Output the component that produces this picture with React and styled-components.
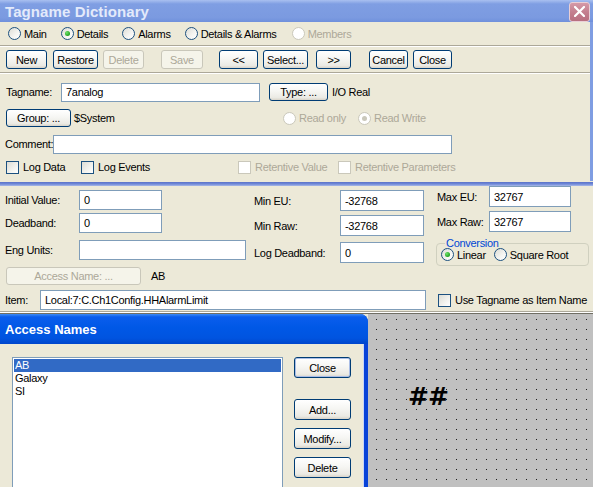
import React from "react";
import styled, { createGlobalStyle } from "styled-components";

const Global = createGlobalStyle`
  html, body { margin: 0; padding: 0; }
  body {
    font-family: "Liberation Sans", Arial, sans-serif;
    font-size: 11px;
    letter-spacing: -0.3px;
    color: #000;
    overflow: hidden;
    background: #ece9d8;
  }
  * { box-sizing: border-box; }
`;

const Screen = styled.div`
  width: 593px;
  height: 487px;
  overflow: hidden;
  display: flex;
  flex-direction: column;
  background: #ece9d8;
`;

const TitleBar = styled.div`
  height: 22px;
  flex: none;
  display: flex;
  align-items: center;
  justify-content: space-between;
  padding: 0 3px 0 5px;
  background: linear-gradient(180deg, #a9c0f0 0%, #7f9ee3 18%, #7b9ae0 80%, #7090dc 100%);
`;

const TitleText = styled.span`
  font-weight: bold;
  font-size: 15px;
  letter-spacing: 0.1px;
  color: #e3eafb;
`;

const CloseX = styled.div`
  width: 21px;
  height: 20px;
  margin-top: 1px;
  border-radius: 3px;
  border: 1px solid #e9cfd6;
  background: linear-gradient(180deg, #d59aa8 0%, #c47f8f 50%, #b86f80 100%);
  display: flex;
  align-items: center;
  justify-content: center;
`;

const TopPanel = styled.div`
  flex: none;
  display: flex;
  flex-direction: column;
  border-right: 3px solid #7f9de2;
  height: 159px;
`;

const RadioRow = styled.div`
  height: 23px;
  display: flex;
  align-items: center;
  padding-left: 8px;
  gap: 14px;
`;

const Sep = styled.div`
  height: 2px;
  flex: none;
  border-top: 1px solid #aca899;
  border-bottom: 1px solid #fff;
`;

const ButtonRow = styled.div`
  height: 25px;
  display: flex;
  align-items: flex-start;
  padding: 3px 0 0 6px;
`;

const Btn = styled.button`
  height: ${(p) => p.$h || 19}px;
  width: ${(p) => p.$w}px;
  margin-left: ${(p) => p.$ml || 0}px;
  margin-top: ${(p) => p.$mt || 0}px;
  padding: 0;
  font-family: inherit;
  font-size: 11px;
  letter-spacing: -0.3px;
  border: 1px solid ${(p) => (p.disabled ? "#c9c7ba" : "#003c74")};
  border-radius: 3px;
  color: ${(p) => (p.disabled ? "#aca899" : "#000")};
  background: ${(p) =>
    p.disabled
      ? "#f5f4ea"
      : "linear-gradient(180deg, #ffffff 0%, #f6f6f3 45%, #ebeae4 85%, #d8d3c8 100%)"};
  box-shadow: ${(p) => (p.$default ? "inset 0 0 0 1px #a9bde6" : "none")};
  flex: none;
`;

const FormBody = styled.div`
  display: flex;
  flex-direction: column;
  padding: 8px 0 0 0;
`;

const Row = styled.div`
  display: flex;
  align-items: center;
  height: ${(p) => p.$h || 20}px;
  margin-top: ${(p) => p.$mt || 0}px;
  padding-left: ${(p) => p.$pl ?? 5}px;
`;

const Label = styled.span`
  width: ${(p) => (p.$w ? `${p.$w}px` : "auto")};
  flex: none;
  margin-left: ${(p) => p.$ml || 0}px;
  color: ${(p) => (p.$disabled ? "#aca899" : "#000")};
  white-space: nowrap;
`;

const Input = styled.div`
  width: ${(p) => p.$w}px;
  height: ${(p) => p.$h || 20}px;
  flex: none;
  border: 1px solid #7f9db9;
  background: #fff;
  padding: 0 4px;
  display: flex;
  align-items: center;
  white-space: nowrap;
  overflow: hidden;
`;

const RadioItem = styled.label`
  display: flex;
  align-items: center;
  gap: 3px;
  flex: none;
  width: ${(p) => (p.$w ? `${p.$w}px` : "auto")};
  color: ${(p) => (p.$disabled ? "#aca899" : "#000")};
`;

const RadioCircle = styled.span`
  width: 13px;
  height: 13px;
  border-radius: 50%;
  border: 1px solid ${(p) => (p.$disabled ? "#cac8bb" : "#1c5180")};
  background: ${(p) =>
    p.$disabled ? "#fff" : "linear-gradient(135deg, #dcdcd5 0%, #f5f5f2 60%, #ffffff 100%)"};
  display: flex;
  align-items: center;
  justify-content: center;
  flex: none;
  &::after {
    content: "";
    display: ${(p) => (p.$on ? "block" : "none")};
    width: 5px;
    height: 5px;
    border-radius: 50%;
    background: ${(p) =>
      p.$disabled ? "#cac8bb" : "radial-gradient(circle at 35% 35%, #6fe36b 0%, #21a121 70%)"};
  }
`;

const CheckItem = styled.label`
  display: flex;
  align-items: center;
  gap: 4px;
  flex: none;
  width: ${(p) => (p.$w ? `${p.$w}px` : "auto")};
  margin-left: ${(p) => p.$ml || 0}px;
  color: ${(p) => (p.$disabled ? "#aca899" : "#000")};
`;

const CheckBox = styled.span`
  width: 13px;
  height: 13px;
  flex: none;
  border: 1px solid ${(p) => (p.$disabled ? "#cac8bb" : "#1c5180")};
  background: ${(p) =>
    p.$disabled ? "#fff" : "linear-gradient(135deg, #dcdcd5 0%, #f3f3ef 60%, #ffffff 100%)"};
`;

const BlueDivider = styled.div`
  height: 5px;
  flex: none;
  background: linear-gradient(180deg, #ece9d8 0%, #ece9d8 20%, #5a72c8 20%, #6f89d8 60%, #a9b9e8 100%);
`;

const Details = styled.div`
  flex: none;
  height: 126px;
  display: flex;
  flex-direction: column;
  border-bottom: 1px solid #aca899;
`;

const DetailCols = styled.div`
  display: flex;
  height: 99px;
`;

const Col = styled.div`
  display: flex;
  flex-direction: column;
  width: ${(p) => p.$w}px;
  padding-top: ${(p) => p.$pt || 0}px;
  flex: none;
`;

const Conversion = styled.fieldset`
  margin: 6px 0 0 -1px;
  padding: 0 0 3px 4px;
  width: 153px;
  height: 28px;
  border: 1px solid #d0d0bf;
  border-radius: 4px;
  display: flex;
  align-items: center;
  gap: 8px;
`;

const Legend = styled.legend`
  color: #0046d5;
  padding: 0 1px;
  margin-left: 4px;
  line-height: 10px;
`;

const BottomEdge = styled.div`
  height: 2px;
  flex: none;
  border-top: 1px solid #fff;
  border-bottom: 1px solid #716f64;
`;

const Bottom = styled.div`
  flex: 1;
  display: flex;
  min-height: 0;
`;

const Dialog = styled.div`
  width: 368px;
  flex: none;
  display: flex;
  flex-direction: column;
  background: #0843d8;
  border-top-right-radius: 8px;
`;

const DlgTitle = styled.div`
  height: 30px;
  flex: none;
  display: flex;
  align-items: center;
  padding-left: 5px;
  border-top-right-radius: 8px;
  background: linear-gradient(180deg, #3f8cf3 0%, #0a5ded 10%, #0058e6 45%, #0054e0 80%, #0046cc 100%);
  font-weight: bold;
  font-size: 13px;
  letter-spacing: 0;
  color: #fff;
`;

const DlgBody = styled.div`
  flex: 1;
  margin-right: 4px;
  background: #ece9d8;
  border-right: 1px solid #c8d6f8;
  display: flex;
  padding: 13px 0 0 12px;
  gap: 11px;
`;

const ListBox = styled.div`
  width: 271px;
  height: 140px;
  flex: none;
  background: #fff;
  border: 1px solid #7f9db9;
  padding: 1px;
  display: flex;
  flex-direction: column;
`;

const ListItem = styled.div`
  height: 13px;
  line-height: 13px;
  padding-left: 1px;
  background: ${(p) => (p.$sel ? "#316ac5" : "transparent")};
  color: ${(p) => (p.$sel ? "#fff" : "#000")};
`;

const BtnCol = styled.div`
  display: flex;
  flex-direction: column;
  gap: 8px;
`;

const Canvas = styled.div`
  flex: 1;
  background-color: #c0c0c0;
  background-image: radial-gradient(circle at 0.5px 0.5px, #1a1a1a 0.7px, transparent 0.9px);
  background-size: 10px 10px;
  background-position: 8px 5px;
  padding: 71px 0 0 40px;
`;

const Hash = styled.div`
  font-family: "DejaVu Sans", "Liberation Sans", sans-serif;
  font-weight: bold;
  font-size: 25px;
  letter-spacing: -1px;
  line-height: 24px;
`;

const Radio = ({ on, disabled, w, children }) => (
  <RadioItem $w={w} $disabled={disabled}>
    <RadioCircle $on={on} $disabled={disabled} />
    {children}
  </RadioItem>
);

const Check = ({ disabled, w, ml, children }) => (
  <CheckItem $w={w} $ml={ml} $disabled={disabled}>
    <CheckBox $disabled={disabled} />
    {children}
  </CheckItem>
);

export default function App() {
  return (
    <Screen>
      <Global />
      <TitleBar>
        <TitleText>Tagname Dictionary</TitleText>
        <CloseX>
          <svg width="11" height="11" viewBox="0 0 11 11">
            <path d="M1 1 L10 10 M10 1 L1 10" stroke="#fff" strokeWidth="2.2" strokeLinecap="square" />
          </svg>
        </CloseX>
      </TitleBar>
      <TopPanel>
        <RadioRow>
          <Radio>Main</Radio>
          <Radio on>Details</Radio>
          <Radio>Alarms</Radio>
          <Radio w={93}>Details &amp; Alarms</Radio>
          <Radio disabled>Members</Radio>
        </RadioRow>
        <Sep />
        <ButtonRow>
          <Btn $w={41}>New</Btn>
          <Btn $w={45} $ml={6}>Restore</Btn>
          <Btn $w={41} $ml={5} disabled>Delete</Btn>
          <Btn $w={42} $ml={17} disabled>Save</Btn>
          <Btn $w={39} $ml={16}>&lt;&lt;</Btn>
          <Btn $w={45} $ml={5}>Select...</Btn>
          <Btn $w={35} $ml={8}>&gt;&gt;</Btn>
          <Btn $w={39} $ml={18}>Cancel</Btn>
          <Btn $w={39} $ml={5}>Close</Btn>
        </ButtonRow>
        <Sep />
        <FormBody>
          <Row $h={20} $pl={6}>
            <Label $w={55}>Tagname:</Label>
            <Input $w={199} $h={19}>7analog</Input>
            <Btn $w={59} $h={18} $ml={9}>Type: ...</Btn>
            <Label $ml={4}>I/O Real</Label>
          </Row>
          <Row $h={20} $mt={6} $pl={6}>
            <Btn $w={65} $h={18}>Group: ...</Btn>
            <Label $w={209} $ml={3}>$System</Label>
            <Radio disabled w={75}>Read only</Radio>
            <Radio disabled on>Read Write</Radio>
          </Row>
          <Row $h={20} $mt={6} $pl={5}>
            <Label $w={48}>Comment:</Label>
            <Input $w={399} $h={19} />
          </Row>
          <Row $h={16} $mt={5} $pl={6}>
            <Check w={75}>Log Data</Check>
            <Check w={157}>Log Events</Check>
            <Check w={100} disabled>Retentive Value</Check>
            <Check disabled>Retentive Parameters</Check>
          </Row>
        </FormBody>
      </TopPanel>
      <BlueDivider />
      <Details>
        <DetailCols>
          <Col $w={254} $pt={4}>
            <Row $pl={5}>
              <Label $w={74}>Initial Value:</Label>
              <Input $w={83}>0</Input>
            </Row>
            <Row $pl={5} $mt={3}>
              <Label $w={74}>Deadband:</Label>
              <Input $w={83}>0</Input>
            </Row>
            <Row $pl={5} $mt={7}>
              <Label $w={74}>Eng Units:</Label>
              <Input $w={167} />
            </Row>
            <Row $pl={6} $mt={7} $h={19}>
              <Btn $w={135} $h={18} disabled>Access Name: ...</Btn>
              <Label $ml={10}>AB</Label>
            </Row>
          </Col>
          <Col $w={183} $pt={4}>
            <Row $pl={0} $h={21}>
              <Label $w={86}>Min EU:</Label>
              <Input $w={84} $h={21}>-32768</Input>
            </Row>
            <Row $pl={0} $h={21} $mt={4}>
              <Label $w={86}>Min Raw:</Label>
              <Input $w={84} $h={21}>-32768</Input>
            </Row>
            <Row $pl={0} $h={21} $mt={6}>
              <Label $w={86}>Log Deadband:</Label>
              <Input $w={84} $h={21}>0</Input>
            </Row>
          </Col>
          <Col $w={156} $pt={0}>
            <Row $pl={0} $h={21}>
              <Label $w={52}>Max EU:</Label>
              <Input $w={82} $h={21}>32767</Input>
            </Row>
            <Row $pl={0} $h={21} $mt={4}>
              <Label $w={52}>Max Raw:</Label>
              <Input $w={82} $h={21}>32767</Input>
            </Row>
            <Conversion>
              <Legend>Conversion</Legend>
              <Radio on>Linear</Radio>
              <Radio>Square Root</Radio>
            </Conversion>
          </Col>
        </DetailCols>
        <Row $pl={5} $mt={5} $h={20}>
          <Label $w={35}>Item:</Label>
          <Input $w={386}>Local:7:C.Ch1Config.HHAlarmLimit</Input>
          <Check ml={12}>Use Tagname as Item Name</Check>
        </Row>
      </Details>
      <BottomEdge />
      <Bottom>
        <Dialog>
          <DlgTitle>Access Names</DlgTitle>
          <DlgBody>
            <ListBox>
              <ListItem $sel>AB</ListItem>
              <ListItem>Galaxy</ListItem>
              <ListItem>SI</ListItem>
            </ListBox>
            <BtnCol>
              <Btn $w={57} $h={21} $default>Close</Btn>
              <Btn $w={57} $h={21} $mt={13}>Add...</Btn>
              <Btn $w={57} $h={21}>Modify...</Btn>
              <Btn $w={57} $h={21}>Delete</Btn>
            </BtnCol>
          </DlgBody>
        </Dialog>
        <Canvas>
          <Hash>##</Hash>
        </Canvas>
      </Bottom>
    </Screen>
  );
}
